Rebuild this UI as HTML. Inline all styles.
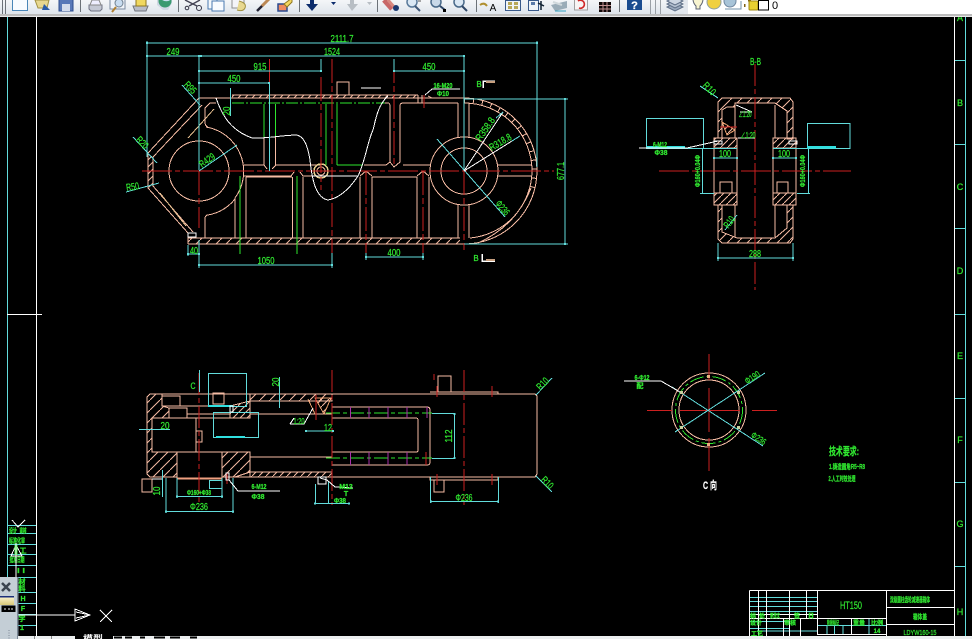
<!DOCTYPE html>
<html><head><meta charset="utf-8"><style>
html,body{margin:0;padding:0;background:#000;width:972px;height:639px;overflow:hidden}
svg{display:block;position:absolute;left:0;top:0}
svg>g{shape-rendering:crispEdges}
.s{fill:none;stroke:#f6bca4;stroke-width:1}
.c{fill:none;stroke:#62dcdc;stroke-width:1}
.d{fill:none;stroke:#62dcdc;stroke-width:1;marker-start:url(#m);marker-end:url(#m)}
.r{fill:none;stroke:#cc2020;stroke-width:1}
.g{fill:none;stroke:#2ee62e;stroke-width:1}
.w{fill:none;stroke:#fff;stroke-width:1}
.p{fill:none;stroke:#a832a8;stroke-width:1}
text{font-family:"Liberation Sans","Noto Sans CJK SC",sans-serif;fill:#30e630;stroke:#30e630;stroke-width:.25;font-size:10px;text-anchor:middle}
.b{font-size:7px;font-weight:bold}
.wt{fill:#fff;stroke:#fff}
.k{fill:#000;stroke:none}
</style></head><body>
<svg width="972" height="639" viewBox="0 0 972 639" xmlns="http://www.w3.org/2000/svg">
<defs>
<pattern id="h" width="7" height="7" patternUnits="userSpaceOnUse"><path d="M0 7L7 0" stroke="#f6bca4" fill="none"/></pattern>
<pattern id="h2" width="10" height="10" patternUnits="userSpaceOnUse"><path d="M0 10L10 0" stroke="#f6bca4" fill="none"/></pattern>
<marker id="m" markerWidth="2" markerHeight="2" refX="1" refY="1" markerUnits="userSpaceOnUse"><rect width="2" height="2" fill="#62dcdc"/></marker>
<linearGradient id="tb" x1="0" y1="0" x2="0" y2="1"><stop offset="0" stop-color="#f4f6f8"/><stop offset="1" stop-color="#dfe5ec"/></linearGradient>
<linearGradient id="yb" x1="0" y1="0" x2="0" y2="1"><stop offset="0" stop-color="#fff8d8"/><stop offset="1" stop-color="#d8c878"/></linearGradient>
</defs>
<rect width="972" height="639" fill="#000"/>

<!-- sheet frame -->
<g>
<path class="c" d="M7.5 17V577M965.5 17V636M954 60.5H965M954 144.5H965M954 228.5H965M954 314.5H965M954 398.5H965M954 482.5H965M954 566.5H965"/>
<path class="w" d="M36.5 17V636M954.5 17V636M7 314.5H42"/>
<path class="c" d="M7 525.5H36M7 533.5H36M7 544.5H36M7 554.5H36M7 565.5H36M7 577.5H36M18 592.5H36M18 603.5H36M18 614.5H36M18 625.5H36"/>
<text x="960" y="21" style="font-size:9px">A</text><text x="960" y="106" style="font-size:9px">B</text><text x="960" y="190" style="font-size:9px">C</text><text x="960" y="274" style="font-size:9px">D</text><text x="960" y="359" style="font-size:9px">E</text><text x="960" y="443" style="font-size:9px">F</text><text x="960" y="527" style="font-size:9px">G</text><text x="960" y="615" style="font-size:9px">H</text>
<text class="b" x="13" y="533" textLength="8" lengthAdjust="spacingAndGlyphs">设计</text><text class="b" x="23" y="533" textLength="7" lengthAdjust="spacingAndGlyphs">审核</text>
<text class="b" x="17" y="543" textLength="16" lengthAdjust="spacingAndGlyphs">标准化审</text>
<text class="b" x="23" y="553">工</text><text class="b" x="17" y="562" textLength="15" lengthAdjust="spacingAndGlyphs">批准日期</text>
<text class="b" x="21" y="573" textLength="8" lengthAdjust="spacingAndGlyphs">I I</text>
<text class="b" x="22" y="584">材</text><text class="b" x="22" y="591">料</text><text class="b" x="23" y="601">H</text><text class="b" x="23" y="611">F</text><text class="b" x="22" y="621">字</text><text class="b" x="22" y="630">1</text>
</g>

<!-- TOP VIEW -->
<g>
<rect x="232" y="95" width="186" height="3" fill="url(#h)"/>
<rect x="188" y="238" width="272" height="6" fill="url(#h2)"/>
<polygon points="148,153 153,157 153,186 148,188" fill="url(#h)"/>
<path class="s" d="M199 98L148 153V188L188 233V244M202 105L153 157V186L193 232M199 98H464M232 95H418M188 238H460M188 244H464"/>
<path d="M214 109L188 138M160 193L186 226" stroke="#e8c090" fill="none"/>
<path d="M464 100.5A70.5 70.5 0 0 1 530 195" fill="none" stroke="#f6bca4" stroke-width="5" stroke-dasharray="1 8"/>
<path class="s" d="M464 98A73 73 0 0 1 464 244M464 103A68 68 0 0 1 532 171A68 68 0 0 1 470 238M531 188Q516 226 478 243"/>
<circle class="s" cx="199" cy="171" r="30"/>
<path class="s" d="M216 103H210L205 108V122Q205 126 208 127M206 127A45 45 0 0 1 235 198V238M205 238V219Q205 215 208 215A45 45 0 0 0 235 199"/>
<path class="s" d="M244 165H264L267 169M264 137V165M275.5 137V165M272 169L276 165H321M244 176H291L294 172M300 172L303 176H312M246 177V238M292.7 177V238M303 177V238M246 177H292"/>
<path class="g" d="M264 104V137M275.5 104V137M326 104V165M337 104V165M337 165H363M240 176V254M297 176V254"/>
<path class="g" d="M232 103H385" stroke-dasharray="12 2 2 2"/>
<path class="s" d="M385 103H388Q390 103 390 106V162L394 167L400 162V106Q400 103 403 103H458M364 165H386L390 162M403 165H430M372 177H417M372 177V238M417 177V238M360 177V238M429 177V238M360 176L366 171L372 176M417 176L423 171L429 176M458 103V137M469 103V137M458 205V238M469 205V238M498 165H532M498 176H532M418 95V103M422 95V103M428 96L432 98H464M337 82H349V95H337Z"/>
<circle class="s" cx="464" cy="171" r="34"/><circle class="s" cx="464" cy="171" r="23"/>
<circle cx="321" cy="171" r="7" fill="none" stroke="#e8d090" stroke-width="1.5"/><circle class="s" cx="321" cy="171" r="4"/>
<rect x="188" y="233" width="8" height="4" fill="none" stroke="#fff"/>
<path class="r" d="M142 171H554" stroke-dasharray="30 3 5 3"/>
<path class="r" d="M199 171V228M269.5 59V83M321 77V190M332 59V253M394 59V165M366 171V258M423 171V258M464 171V250M424 95V108" stroke-dasharray="24 3 6 3"/>
<path class="w" d="M216 98C222 115 230 130 252 138C265 139 283 135 297 135C305 137 308 148 310 160C312 180 316 198 328 200C340 198 350 188 358 176C365 162 368 140 373 130C376 118 378 105 388 96"/>
<path class="w" d="M312 176H358M361 88H381M425 95L432 89H460"/>
<path class="c" d="M147 41V157M537 41V167M199 55V170M464 55V171M269.5 83V171M321 59V71M394 59V71M464 99H568M464 244H568M199 240V268M332 253V268M366 253V260M423 253V260M188 245V256M230.7 88V116"/>
<path class="d" d="M147 43H537"/><path class="d" d="M147 56H199"/><path class="d" d="M201 56H464"/><path class="d" d="M199 71H321"/><path class="d" d="M199 83H269"/><path class="d" d="M394 71H464"/><path class="d" d="M565 99V244"/><path class="d" d="M199 265H332"/><path class="d" d="M366 257H423"/><path class="d" d="M188 254H199"/>
<path class="c" d="M182 85L200 105M133 137L157 163M126 192L159 183M199 171L237 145M437 139L505 217"/>
<path class="w" d="M464 171L503 112M464 171L520 136"/>
<path class="c" d="M503 112L496 118M520 136L512 141"/>
<path d="M483 88V81H495M482 254V261H495" fill="none" stroke="#fff" stroke-width="1.5"/>
<path d="M486 81H495V83H486ZM486 259H495V261H486Z" fill="#c8a080"/>
<text x="342" y="42" textLength="23" lengthAdjust="spacingAndGlyphs">2111.7</text>
<text x="173" y="55" textLength="13" lengthAdjust="spacingAndGlyphs">249</text>
<text x="332" y="55" textLength="16" lengthAdjust="spacingAndGlyphs">1524</text>
<text x="260" y="70" textLength="13" lengthAdjust="spacingAndGlyphs">915</text>
<text x="234" y="82" textLength="13" lengthAdjust="spacingAndGlyphs">450</text>
<text x="429" y="70" textLength="13" lengthAdjust="spacingAndGlyphs">450</text>
<text transform="translate(230 111) rotate(-90)" textLength="9" lengthAdjust="spacingAndGlyphs">20</text>
<text transform="translate(188 90) rotate(45)" textLength="13" lengthAdjust="spacingAndGlyphs">R95</text>
<text transform="translate(140 145) rotate(45)" textLength="13" lengthAdjust="spacingAndGlyphs">R20</text>
<text transform="translate(133 190) rotate(-8)" textLength="13" lengthAdjust="spacingAndGlyphs">R50</text>
<text transform="translate(209 163) rotate(-35)" textLength="17" lengthAdjust="spacingAndGlyphs">R429</text>
<text x="266" y="264" textLength="17" lengthAdjust="spacingAndGlyphs">1050</text>
<text x="194" y="254" textLength="8" lengthAdjust="spacingAndGlyphs">40</text>
<text x="394" y="256" textLength="13" lengthAdjust="spacingAndGlyphs">400</text>
<text class="b" x="443" y="88" textLength="19" lengthAdjust="spacingAndGlyphs">16-M20</text>
<text class="b" x="443" y="96" textLength="12" lengthAdjust="spacingAndGlyphs">Φ10</text>
<text x="479" y="87" style="font-size:8px">B</text><text x="476" y="261" style="font-size:8px">B</text>
<text transform="translate(488 131) rotate(-55)" textLength="26" lengthAdjust="spacingAndGlyphs">R358.8</text>
<text transform="translate(502 145) rotate(-30)" textLength="24" lengthAdjust="spacingAndGlyphs">R318.8</text>
<text transform="translate(500 210) rotate(50)" textLength="16" lengthAdjust="spacingAndGlyphs">Φ236</text>
<text transform="translate(564 171) rotate(-90)" textLength="18" lengthAdjust="spacingAndGlyphs">677.1</text>
</g>

<!-- RIGHT SECTION VIEW -->
<g>
<path d="M718 102L722 98H790L793 102V139H787V111L775 103H735V107H727L722 110V138H718Z" fill="url(#h2)" stroke="#f6bca4"/>
<path d="M718 205V239L722 243H790L793 239V205H787V228L775 238H737L722 232V205Z" fill="url(#h2)" stroke="#f6bca4"/>
<rect x="714" y="193" width="23" height="12" fill="url(#h)" stroke="#f6bca4"/>
<rect x="773" y="193" width="23" height="12" fill="url(#h)" stroke="#f6bca4"/>
<rect x="714" y="138" width="23" height="10" fill="url(#h)" stroke="#f6bca4"/>
<rect x="773" y="138" width="23" height="10" fill="url(#h)" stroke="#f6bca4"/>
<path class="s" d="M714 148V193M737 148V193M773 148V193M796 148V193M735 105V138M775 105V138M735 205V237M775 205V237M720 182H732V193H720ZM777 182H788V193H777Z"/>
<path d="M722 122L735 130L727 135Z" fill="url(#h)" stroke="#e8a070"/>
<rect x="714" y="141" width="8" height="3" fill="none" stroke="#fff"/><rect x="789" y="141" width="8" height="3" fill="none" stroke="#fff"/>
<path class="r" d="M755 64V290" stroke-dasharray="22 3 5 3"/>
<path class="r" d="M659 171H851" stroke-dasharray="30 3 5 3"/>
<path class="r" d="M720 127H737"/>
<path class="c" d="M646.5 118.5H703.5V148.5H646.5ZM807.5 123.5H850V148.5H807.5ZM703 148.5H737M773 148.5H807M700 193.5H714M797 193.5H810M702.5 148V193M808.5 148V193M718 243V261M793 243V261"/>
<path class="d" d="M718 258H793"/><path class="d" d="M714 158H737"/><path class="d" d="M773 158H796"/>
<path d="M647 147H685M807 147H836" stroke="#30e0e0" stroke-width="2.5" fill="none"/>
<path class="w" d="M639 148H687L718 141M738 138L744 138H755M740 112H752L736 105"/>
<path class="c" d="M700 86L718 98M725 230L737 215"/>
<text x="755.5" y="65" textLength="11" lengthAdjust="spacingAndGlyphs">B-B</text>
<text transform="translate(707 91) rotate(45)" textLength="14" lengthAdjust="spacingAndGlyphs">R10</text>
<text x="745" y="117" style="font-size:8px" textLength="13" lengthAdjust="spacingAndGlyphs">∠1:20</text>
<text x="748" y="138" style="font-size:8px" textLength="15" lengthAdjust="spacingAndGlyphs">∠1:20</text>
<text class="b" x="660" y="147" textLength="14" lengthAdjust="spacingAndGlyphs">6-M12</text>
<text class="b" x="661" y="155" textLength="13" lengthAdjust="spacingAndGlyphs">Φ38</text>
<text x="725" y="157" textLength="12" lengthAdjust="spacingAndGlyphs">100</text>
<text x="784" y="157" textLength="12" lengthAdjust="spacingAndGlyphs">100</text>
<text class="b" transform="translate(700 171) rotate(-90)" textLength="32" lengthAdjust="spacingAndGlyphs">Φ160+0.04Φ</text>
<text class="b" transform="translate(805 171) rotate(-90)" textLength="32" lengthAdjust="spacingAndGlyphs">Φ160+0.04Φ</text>
<text transform="translate(732 224) rotate(-55)" textLength="12" lengthAdjust="spacingAndGlyphs">R10</text>
<text x="755" y="257" textLength="12" lengthAdjust="spacingAndGlyphs">288</text>
</g>

<!-- BOTTOM VIEW -->
<g>
<polygon points="147,397 150,394 162,394 162,406 169,408 169,418 152,418 152,452 177,452 177,477 150,477 147,474" fill="url(#h2)" stroke="#f6bca4"/>
<rect x="250" y="394" width="82" height="7" fill="url(#h2)" stroke="#f6bca4"/>
<polygon points="230,406 250,401 250,418 230,418" fill="url(#h)" stroke="#f6bca4"/>
<polygon points="222,452 250,452 250,472 235,477 222,477" fill="url(#h2)" stroke="#f6bca4"/>
<rect x="250" y="472" width="82" height="5" fill="url(#h)" stroke="#f6bca4"/>
<path class="s" d="M150 394H535L537 396V474L535 477H235M152 418H250M250 414H332M250 452V457H332M152 452H250M196 418V452M196 431H202V442H196M177 452V478M222 452V478M162 396H180V406H162ZM169 408H187V418H169ZM180 406H230M187 414H230M213 393H224V404H213ZM332 407H427Q430 407 430 410V462Q430 465 427 465H332M332 418H416Q418 418 418 420V450Q418 452 416 452H332M430 392H498V394M430 477V480H498V477M438 392V376H451V392M434 480V492H444V480M142 479H152V492H142Z"/>
<path d="M177 478.5H222" stroke="#f0a080" stroke-width="2" fill="none"/>
<path d="M315 398L331 398L324 414ZM308 399L315 414" fill="url(#h)" stroke="#e8a070"/>
<path class="g" d="M326 413H432M326 458H432" stroke-dasharray="14 3 4 3"/>
<path class="p" d="M350.7 407V418M369 407V418M388 407V418M407 407V418M427 407V418M350.7 452V465M369 452V465M388 452V465M407 452V465"/>
<path class="r" d="M199 373V505M332 370V505M464 370V505" stroke-dasharray="22 3 5 3"/>
<path class="r" d="M437 386V397M492 386V397M437 474V485M492 474V485M434 374V380M227 473V484M316 395V420M426 452V465"/>
<path class="c" d="M208.5 373.5H246.5V406.5H208.5ZM213.5 412.5H258.5V437.5H213.5ZM432 413.5H455M432 458.5H455M430.5 477V503M498.5 477V503M166 478V513M233 478V513M177 478V498M222 478V498M209.5 480.5H222V488.5H209.5ZM162.5 470V497M279.5 377V408M315.5 484V504M328.5 481V504M139 429.5H170"/>
<path class="d" d="M454.5 414V458"/><path class="d" d="M431 501.5H498"/><path class="d" d="M166 511.5H233"/><path class="d" d="M177 496.5H222"/><path class="d" d="M315 503.5H349"/><path class="d" d="M306 431H333"/>
<path class="c" d="M199.5 370V392"/>
<path d="M208 406H233M216 437H245" stroke="#30e0e0" stroke-width="2" fill="none"/>
<rect x="230" y="406" width="3" height="6" fill="none" stroke="#fff"/><rect x="226" y="473" width="3" height="7" fill="none" stroke="#fff"/><rect x="318" y="477" width="8" height="7" fill="none" stroke="#fff"/>
<path class="w" d="M152 479H162M229 480L238 491H280M320 478L327 480L335 487L353 488M290 424H304L313 408M290 424L294 418"/>
<path class="c" d="M536 395L552 378M536 476L552 492"/>
<text x="193" y="389" style="font-size:9px" textLength="5" lengthAdjust="spacingAndGlyphs">C</text>
<text transform="translate(279 382) rotate(-90)" textLength="9" lengthAdjust="spacingAndGlyphs">20</text>
<text x="165" y="429" textLength="9" lengthAdjust="spacingAndGlyphs">20</text>
<text x="299" y="424" style="font-size:8px" textLength="11" lengthAdjust="spacingAndGlyphs">1:20</text>
<text x="328" y="431" textLength="8" lengthAdjust="spacingAndGlyphs">12</text>
<text transform="translate(452 436) rotate(-90)" textLength="13" lengthAdjust="spacingAndGlyphs">112</text>
<text class="b" x="259" y="489" textLength="15" lengthAdjust="spacingAndGlyphs">6-M12</text>
<text class="b" x="258" y="499" textLength="13" lengthAdjust="spacingAndGlyphs">Φ38</text>
<text class="b" x="199" y="495" textLength="24" lengthAdjust="spacingAndGlyphs">Φ160+Φ38</text>
<text x="199" y="510" textLength="18" lengthAdjust="spacingAndGlyphs">Φ236</text>
<text transform="translate(160 491) rotate(-90)" textLength="9" lengthAdjust="spacingAndGlyphs">10</text>
<text transform="translate(545 386) rotate(-45)" textLength="13" lengthAdjust="spacingAndGlyphs">R10</text>
<text transform="translate(545 485) rotate(45)" textLength="13" lengthAdjust="spacingAndGlyphs">R10</text>
<text x="464" y="501" textLength="17" lengthAdjust="spacingAndGlyphs">Φ236</text>
<text class="b" x="346" y="489">M12</text><text class="b" x="346" y="496">T</text><text class="b" x="340" y="503" textLength="12" lengthAdjust="spacingAndGlyphs">Φ38</text>
</g>

<!-- CIRCLE VIEW -->
<g>
<circle class="s" cx="709" cy="410" r="37"/>
<circle class="s" cx="709" cy="410" r="30"/>
<circle class="g" cx="709" cy="410" r="33.5" stroke-dasharray="14 3 3 3"/>
<path class="r" d="M709 354V380M709 388V432M709 438V471M647 410.5H672M680 410.5H740M752 410.5H777"/>
<path class="c" d="M675 432L765 373M672 387L763 446"/>
<path class="w" d="M624 381H661L680 392"/>
<rect x="707" y="375" width="3" height="3" fill="#e8b080"/><rect x="707" y="443" width="3" height="3" fill="#e8b080"/><rect x="680" y="391" width="3" height="3" fill="#c8d0a0"/><rect x="737" y="391" width="3" height="3" fill="#c8d0a0"/><rect x="680" y="426" width="3" height="3" fill="#c8d0a0"/><rect x="737" y="426" width="3" height="3" fill="#c8d0a0"/>
<text class="b" x="642" y="380" textLength="15" lengthAdjust="spacingAndGlyphs">6-Φ12</text>
<text class="b" x="640" y="388" textLength="7" lengthAdjust="spacingAndGlyphs">配</text>
<text transform="translate(754 380) rotate(-33)" style="font-size:9px" textLength="16" lengthAdjust="spacingAndGlyphs">Φ190</text>
<text transform="translate(757 441) rotate(33)" style="font-size:9px" textLength="16" lengthAdjust="spacingAndGlyphs">Φ236</text>
<text class="wt" x="710" y="489" style="font-size:11px;font-weight:bold" textLength="14" lengthAdjust="spacingAndGlyphs">C 向</text>
<text x="844" y="455" style="font-size:11px;font-weight:bold" textLength="30" lengthAdjust="spacingAndGlyphs">技术要求:</text>
<text x="847" y="469" style="font-size:7px;font-weight:bold" textLength="36" lengthAdjust="spacingAndGlyphs">1.铸造圆角R5~R8</text>
<text x="842" y="481" style="font-size:7px;font-weight:bold" textLength="27" lengthAdjust="spacingAndGlyphs">2.人工时效处理</text>
</g>

<!-- TITLE BLOCK -->
<g>
<path class="c" d="M749 597.5H817M749 601.5H817M749 606.5H817M749 611.5H817M749 621.5H789M749 628.5H789M757 631H817M827 625V634M834.5 625V634M843 625V634M869 618V634M817 625.5H886"/>
<path class="w" d="M749.5 590.5H954M749.5 590.5V636M758.5 590V636M766.5 590V636M789.5 590V636M806.5 590V618M817.5 590V634M886.5 590V636M954.5 590V636M749 614.5H817M749 618.5H886M886 607.5H954M886 624.5H954M817 634.5H886M783.5 618V636M800.5 618V636M851.5 618V634"/>
<text x="851" y="609" style="font-size:11px" textLength="22" lengthAdjust="spacingAndGlyphs">HT150</text>
<text class="b" x="753" y="618" style="font-size:6px">标</text><text class="b" x="762" y="618" style="font-size:6px">处</text><text class="b" x="775" y="618" style="font-size:6px" textLength="10" lengthAdjust="spacingAndGlyphs">更改文</text><text class="b" x="797" y="618" style="font-size:6px">签</text><text class="b" x="811" y="618" style="font-size:6px">日</text>
<text class="b" x="756" y="625" style="font-size:6px">设计</text><text class="b" x="790" y="625" style="font-size:6px">审核</text><text class="b" x="757" y="636" style="font-size:6px">工艺</text>
<text class="b" x="833" y="625" style="font-size:6px" textLength="12" lengthAdjust="spacingAndGlyphs">阶段标记</text><text class="b" x="859" y="625" style="font-size:6px">重量</text><text class="b" x="877" y="625" style="font-size:6px">比例</text><text class="b" x="877" y="633" style="font-size:6px">14</text>
<text x="910" y="602" class="b" textLength="40" lengthAdjust="spacingAndGlyphs">双级圆柱齿轮减速器箱体</text>
<text x="920" y="619" class="b" textLength="14" lengthAdjust="spacingAndGlyphs">箱体盖</text>
<text x="920" y="635" style="font-size:7px" textLength="33" lengthAdjust="spacingAndGlyphs">LDYW160-15</text>
</g>

<!-- UCS ICON -->
<g>
<path class="w" d="M16 543V615H75M11 556H22L16 545ZM75 609L90 615L75 621ZM76 612L90 615M76 618L90 615M100 610L112 622M112 610L100 622M12 520L18 527L25 520"/>
<path d="M15 545V555M17 545V555" stroke="#39e039"/>
</g>

<!-- left floating widget -->
<rect x="0" y="577" width="18" height="62" fill="#c4ced6"/>
<rect x="17" y="577" width="1.5" height="62" fill="#7b8896"/>
<path d="M2 583L10 591M10 583L2 591" stroke="#3a4450" stroke-width="2.5"/>
<rect x="0" y="596" width="14" height="9" fill="url(#yb)"/><rect x="0" y="596" width="14" height="1.5" fill="#1c2f7a"/>
<rect x="1.5" y="605.5" width="14" height="6.5" fill="#000"/><path d="M4 609H6M8 609H10M11 609H13" stroke="#eee"/>
<path d="M9 630V639" stroke="#7b8896" stroke-dasharray="1 1.5"/>

<!-- bottom strip -->
<rect x="18" y="636" width="954" height="3" fill="#eceff0"/>
<rect x="75" y="636" width="38" height="3" fill="#000"/>
<rect x="34" y="636" width="1" height="3" fill="#888"/><rect x="51" y="636" width="1" height="3" fill="#888"/>
<text x="93" y="642" class="wt" style="font-size:9px" textLength="20" lengthAdjust="spacingAndGlyphs">模型</text>
<path d="M114 637.5H122M125 637.5H132M140 637.5H145M154 637.5H165M170 637.5H180M190 637.5H197" stroke="#000" stroke-width="2"/>

<!-- TOP TOOLBAR -->
<rect x="0" y="0" width="688" height="14" fill="url(#tb)"/>
<rect x="688" y="0" width="284" height="14" fill="#fff"/>
<rect x="0" y="14" width="972" height="2" fill="#bcbcbc"/>
<rect x="0" y="16" width="972" height="1" fill="#e8e8e8"/>
<g fill="#6c7278">
<rect x="2" y="0" width="1" height="14"/><rect x="5" y="0" width="1" height="14"/>
<rect x="80" y="0" width="1" height="12"/><rect x="178" y="0" width="1" height="12"/><rect x="299" y="0" width="1" height="12"/><rect x="377" y="0" width="1" height="12"/><rect x="476" y="0" width="1" height="12"/><rect x="619" y="0" width="1" height="12"/>
<rect x="650" y="0" width="1" height="14" fill="#9aa0a6"/><rect x="655" y="0" width="1" height="14" fill="#9aa0a6"/><rect x="660" y="0" width="1" height="14" fill="#9aa0a6"/>
</g>
<!-- new -->
<rect x="12.5" y="-3" width="15" height="13.5" fill="#f8fbff" stroke="#4a86b8"/>
<!-- open -->
<path d="M35 0H49L47 8H38Z" fill="#e8d890" stroke="#a09040"/><path d="M44 4L50 10H42Z" fill="#2a5ca8"/>
<!-- save -->
<rect x="59" y="-2" width="14" height="13" fill="#5878b8" stroke="#2c4c8c"/><rect x="62" y="4" width="8" height="7" fill="#d4dcec"/>
<!-- print -->
<path d="M89 5H102V9L100 11H91L89 9Z" fill="#c4c8d4" stroke="#707484"/><path d="M92 0H99L101 5H90Z" fill="#eef" stroke="#888"/>
<!-- preview -->
<rect x="110" y="-2" width="15" height="11" fill="#eef2f8" stroke="#7a8aa0"/><circle cx="119" cy="3" r="4" fill="#c8dcf0" stroke="#708090"/><path d="M116 7L112 12" stroke="#b08030" stroke-width="2"/>
<!-- plot -->
<path d="M133 6H148L146 11H135Z" fill="#b8bcc8" stroke="#70747c"/><path d="M136 -1H146V6H136Z" fill="#f0d860" stroke="#907820"/>
<!-- globe -->
<path d="M157 5L163 10H168L172 3V-2H157Z" fill="#d0d8e4"/><circle cx="165" cy="1" r="6.5" fill="#3a9a70"/><path d="M161 -2Q166 2 170 -1" stroke="#c8e0f0" fill="none" stroke-width="2"/>
<!-- scissors -->
<path d="M185 0L197 6M200 0L189 6" stroke="#445" stroke-width="1.4" fill="none"/><circle cx="199" cy="8" r="2.5" fill="none" stroke="#334"/><circle cx="187" cy="8" r="1.8" fill="none" stroke="#334"/>
<!-- copy -->
<rect x="208" y="-2" width="9" height="11" fill="#f4f8fc" stroke="#4a7ab0"/><rect x="212" y="1" width="12" height="10" fill="#f8fbff" stroke="#4a7ab0"/>
<!-- paste -->
<rect x="232" y="-2" width="12" height="10" fill="#f4f4f8" stroke="#909090"/><path d="M239 1Q247 3 245 8Q243 12 237 10" fill="#e8d890" stroke="#a09040"/>
<!-- brush -->
<path d="M257 11L263 5" stroke="#223" stroke-width="2.5"/><path d="M262 6L269 -1" stroke="#b85" stroke-width="3"/>
<!-- match prop -->
<rect x="278" y="4" width="9" height="7" fill="#ee8a60" stroke="#2a4a90" stroke-width="1.5"/><path d="M284 4L292 -2V2L287 7Z" fill="#f4d860" stroke="#907820"/>
<!-- undo -->
<path d="M312 -1V5" stroke="#0c2c6c" stroke-width="4"/><path d="M306 4H318L312 11Z" fill="#0c2c6c"/>
<path d="M331 2H336L333.5 5Z" fill="#0c2c6c"/>
<path d="M352 -1V5" stroke="#b8bec4" stroke-width="4"/><path d="M347 4H358L352 11Z" fill="#b8bec4"/>
<path d="M367 2H372L369.5 5Z" fill="#b8bec4"/>
<!-- pan -->
<path d="M384 0L392 9" stroke="#c86868" stroke-width="5"/><path d="M388 0L395 8" stroke="#d88880" stroke-width="3"/><circle cx="396" cy="8" r="3" fill="#1a3870"/>
<!-- zoom -->
<circle cx="412" cy="2" r="5" fill="#dbe8f4" stroke="#5a7a9a" stroke-width="1.5"/><path d="M415 6L420 11" stroke="#405878" stroke-width="2"/><path d="M418 1H421" stroke="#555"/>
<circle cx="436" cy="2" r="5" fill="#c8d8e8" stroke="#4a6a8a" stroke-width="1.5"/><path d="M440 6L445 10" stroke="#304868" stroke-width="2"/><rect x="443" y="9" width="3" height="3" fill="#000"/>
<circle cx="459" cy="2" r="5" fill="#dbe8f4" stroke="#4a6a8a" stroke-width="1.5"/><path d="M462 6L467 11" stroke="#304868" stroke-width="2"/>
<!-- right group -->
<path d="M480 5Q484 2 487 6" stroke="#b09030" fill="none" stroke-width="2"/><text class="k" x="493" y="11" style="font-size:10px">A</text>
<rect x="505.5" y="0.5" width="15" height="10" fill="#f0f4f8" stroke="#3a5a8a"/><rect x="508" y="2" width="4" height="3" fill="#b8a858"/><rect x="514" y="2" width="4" height="3" fill="#b8a858"/><rect x="508" y="6" width="4" height="3" fill="#b8a858"/><rect x="514" y="6" width="4" height="3" fill="#b8a858"/>
<rect x="528.5" y="0.5" width="10" height="10" fill="#f0f4f8" stroke="#3a5a8a"/><rect x="531" y="2" width="4" height="3" fill="#5a7aa8"/><path d="M541 1V10M538 3L544 6" stroke="#123" stroke-width="1.5"/>
<path d="M551 5L567 1V8L555 11Z" fill="#9aacb8"/><path d="M555 11H566" stroke="#30a0c0"/><path d="M553 2L562 5" stroke="#d0d8dc" stroke-width="2"/>
<rect x="574.5" y="-1" width="13" height="11" fill="#f8f4f4" stroke="#a0a0a0"/><path d="M578 1A4 4 0 1 1 579 8" stroke="#d02828" fill="none" stroke-width="1.6"/>
<rect x="599" y="2" width="12" height="10" fill="#100808"/><path d="M603 2V12M607 2V12M599 5.5H611M599 9H611" stroke="#c09090"/>
<rect x="627" y="-2" width="15" height="12" fill="#1a4c90"/><text x="634.5" y="9" class="wt" style="font-size:11px;font-weight:bold">?</text>
<!-- layers -->
<path d="M667 7L675 11L683 7L675 3Z" fill="#9aa8bc" stroke="#607088"/><path d="M667 4L675 8L683 4L675 0Z" fill="#b4c0d0" stroke="#607088"/><path d="M667 1L675 5L683 1L675 -3Z" fill="#cdd6e2" stroke="#607088"/>
<rect x="684" y="0" width="4" height="14" fill="#e4e8ee"/>
<!-- layer dropdown -->
<path d="M693 -1Q693 3 696 6V9H700V6Q703 3 703 -1" fill="#f8f4d0" stroke="#5a6070"/>
<circle cx="714" cy="2" r="7" fill="#f0d040" stroke="#90a0a0"/>
<circle cx="730" cy="1" r="6" fill="#a8c4d8" stroke="#7088a0"/><path d="M725 9H741V1" fill="none" stroke="#7090a8"/>
<rect x="744" y="4" width="1.5" height="3" fill="#806010"/><rect x="748" y="0" width="3" height="1.5" fill="#806010"/>
<rect x="749" y="1" width="9" height="9" rx="1" fill="#e8d030" stroke="#a08810"/>
<rect x="758.5" y="0.5" width="10" height="9.5" fill="#fff" stroke="#000"/>
<text class="k" x="775" y="9" style="font-size:11px">0</text>
</svg>
</body></html>
